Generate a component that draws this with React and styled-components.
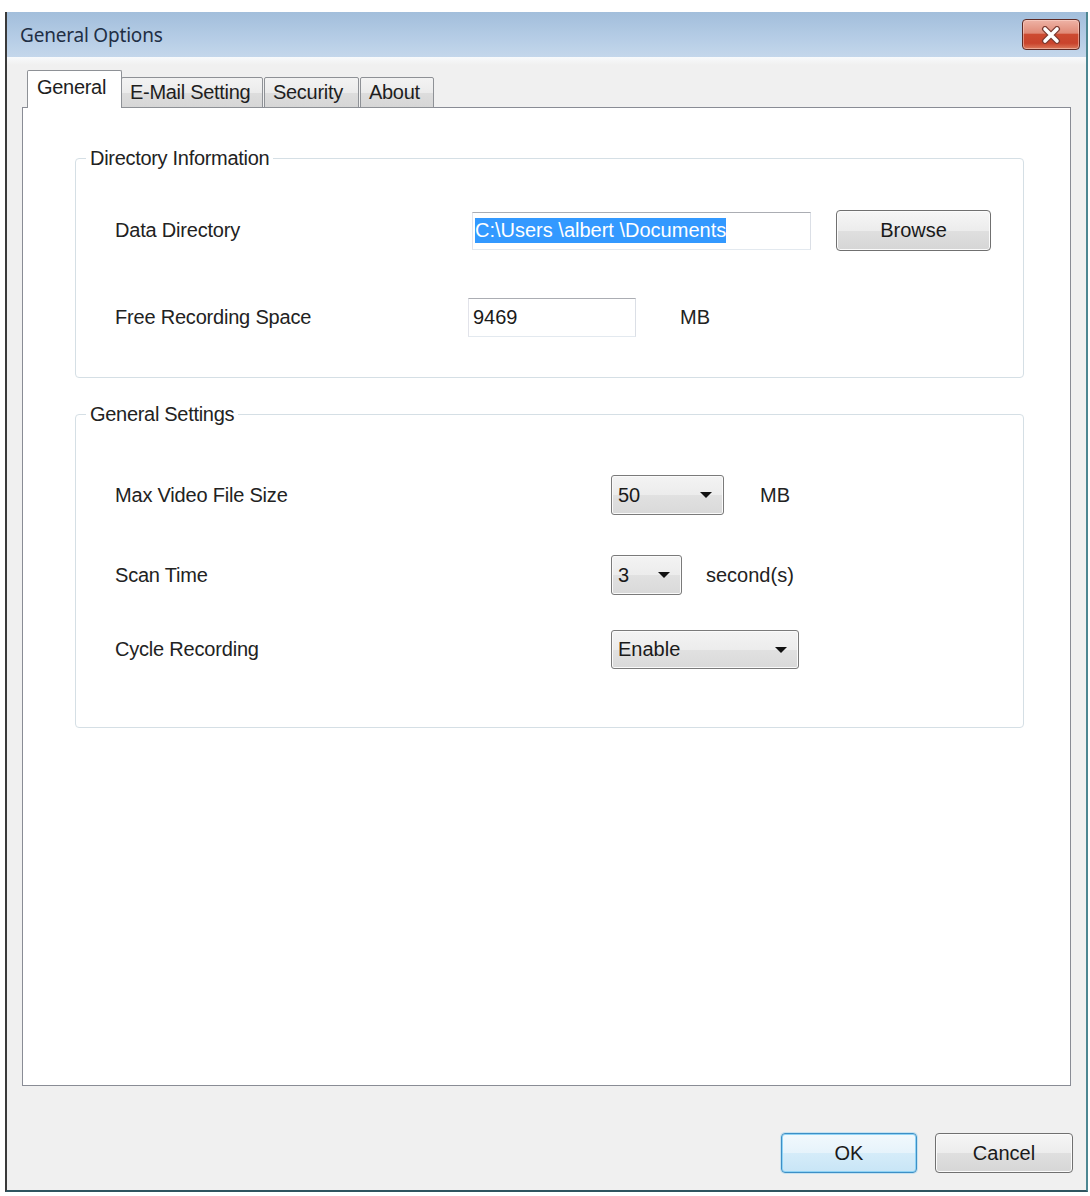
import React from 'react';
import styled, { createGlobalStyle } from 'styled-components';

const GlobalStyle = createGlobalStyle`
  body {
    margin: 0;
    background: #ffffff;
    font-family: "Liberation Sans", Arial, sans-serif;
  }
`;

const Window = styled.div`
  margin: 12px 0 0 5px;
  width: 1083px;
  height: 1180px;
  box-sizing: border-box;
  display: flex;
  flex-direction: column;
  border-left: 2px solid #3a3a3a;
  border-right: 2px solid #4d8792;
  border-bottom: 2px solid #2f5560;
  box-shadow: inset 2px 0 0 #e4eef6, inset -2px 0 0 #bfe3ec, inset 0 -2px 0 #b9e1ea;
  background: #f0f0f0;
`;

const TitleBar = styled.div`
  height: 45px;
  flex: none;
  display: flex;
  align-items: center;
  justify-content: space-between;
  padding: 0 6px 0 13px;
  background: linear-gradient(#a2bedb, #b6cde6 60%, #c4d7eb);
`;

const Title = styled.span`
  font-family: "Noto Sans", "Liberation Sans", sans-serif;
  font-size: 19px;
  color: #1f2f45;
  letter-spacing: -0.2px;
`;

const CloseButton = styled.div`
  width: 58px;
  height: 31px;
  box-sizing: border-box;
  border: 1px solid #5e2a24;
  border-radius: 4px;
  display: flex;
  align-items: center;
  justify-content: center;
  background: linear-gradient(#eeb3a6, #e08a77 45%, #cc4a31 50%, #c9432c 80%, #dc7a5c);
  box-shadow: inset 0 0 0 1px rgba(255, 220, 210, 0.5);
`;

const Body = styled.div`
  flex: 1;
  display: flex;
  flex-direction: column;
  padding: 13px 15px 0 15px;
  background: linear-gradient(#f8fafc, #f0f0f0 8px);
`;

const TabRow = styled.div`
  display: flex;
  align-items: flex-end;
  padding-left: 5px;
  margin-bottom: -1px;
  position: relative;
  z-index: 1;
`;

const Tab = styled.div`
  width: ${p => p.w}px;
  height: ${p => (p.selected ? 38 : 31)}px;
  box-sizing: border-box;
  margin-right: ${p => p.gap || 0}px;
  margin-left: ${p => (p.selected ? 0 : -1)}px;
  display: flex;
  align-items: center;
  padding: ${p => (p.selected ? '0 0 4px 9px' : '0 0 0 8px')};
  font-size: 20px;
  letter-spacing: -0.3px;
  color: #1e1e1e;
  border: 1px solid #8e9196;
  border-bottom: ${p => (p.selected ? 'none' : '1px solid #8e9196')};
  border-radius: 2px 2px 0 0;
  background: ${p =>
    p.selected ? '#ffffff' : 'linear-gradient(#f3f3f3, #ebebeb 50%, #dddddd 51%, #d6d6d6)'};
`;

const Panel = styled.div`
  height: 979px;
  box-sizing: border-box;
  border: 1px solid #898c95;
  background: #ffffff;
  display: flex;
  flex-direction: column;
  padding: 39px 46px 0 52px;
`;

const Group = styled.fieldset`
  margin: ${p => p.top}px 0 0 0;
  padding: 0;
  border: 1px solid #d5dfe5;
  border-radius: 4px;
  min-width: 0;
`;

const Legend = styled.legend`
  margin-left: 10px;
  padding: 0 4px;
  font-size: 20px;
  line-height: 22px;
  letter-spacing: -0.3px;
  color: #222;
`;

const GroupBody = styled.div`
  display: flex;
  flex-direction: column;
  gap: ${p => p.gap || 0}px;
  padding: ${p => p.pt}px 0 ${p => p.pb}px 39px;
`;

const Row = styled.div`
  display: flex;
  align-items: center;
  height: ${p => p.h || 41}px;
  margin-top: ${p => p.mt || 0}px;
`;

const Label = styled.div`
  width: ${p => p.w}px;
  flex: none;
  font-size: 20px;
  letter-spacing: -0.2px;
  color: #222;
`;

const Unit = styled.span`
  margin-left: ${p => p.gap}px;
  font-size: 20px;
  color: #222;
`;

const TextBox = styled.div`
  width: ${p => p.w}px;
  height: ${p => p.h}px;
  margin-left: ${p => p.ml || 0}px;
  box-sizing: border-box;
  border: 1px solid;
  border-color: #abadb3 #dbdfe6 #e3e9ef #e2e3ea;
  background: #fff;
  display: flex;
  align-items: center;
  padding-left: ${p => p.pl}px;
  font-size: 20px;
  color: #1a1a1a;
  white-space: nowrap;
  overflow: hidden;
`;

const Selected = styled.span`
  background: #3399ff;
  color: #ffffff;
  line-height: 25px;
`;

const Button = styled.div`
  width: ${p => p.w}px;
  height: ${p => p.h || 40}px;
  margin-left: ${p => p.ml || 0}px;
  box-sizing: border-box;
  border: 1px solid ${p => (p.primary ? '#3d8fc6' : '#707070')};
  border-radius: 4px;
  display: flex;
  align-items: center;
  justify-content: center;
  font-size: 20px;
  color: #1a1a1a;
  background: ${p =>
    p.primary
      ? 'linear-gradient(#f2f9fd, #e6f3fb 50%, #d5ecf9 51%, #c8e5f6)'
      : 'linear-gradient(#f6f6f6, #ececec 50%, #dfdfdf 51%, #d6d6d6)'};
  box-shadow: ${p =>
    p.primary
      ? 'inset 0 0 0 1px #8fd3f5, 0 0 0 1px rgba(120, 200, 240, 0.35)'
      : 'inset 0 0 0 1px #fbfbfb'};
`;

const Combo = styled.div`
  width: ${p => p.w}px;
  height: ${p => p.h || 40}px;
  box-sizing: border-box;
  border: 1px solid #7a7a7a;
  border-radius: 3px;
  display: flex;
  align-items: center;
  justify-content: space-between;
  padding: 0 11px 0 6px;
  font-size: 20px;
  color: #1a1a1a;
  background: linear-gradient(#f3f3f3, #ececec 50%, #e1e1e1 51%, #d9d9d9);
  box-shadow: inset 0 0 0 1px #fafafa;
`;

const Arrow = styled.span`
  width: 0;
  height: 0;
  border-left: 6px solid transparent;
  border-right: 6px solid transparent;
  border-top: 6px solid #111;
`;

const Footer = styled.div`
  display: flex;
  justify-content: flex-end;
  padding: 47px 0 0 0;
  margin-right: -2px;
`;

const CloseGlyph = () => (
  <svg width="22" height="18" viewBox="0 0 22 18">
    <path d="M5 3 L17 15 M17 3 L5 15" stroke="#7a3a30" strokeWidth="6" strokeLinecap="round" />
    <path d="M5 3 L17 15 M17 3 L5 15" stroke="#ffffff" strokeWidth="3.6" strokeLinecap="round" />
  </svg>
);

const tabs = [
  { name: 'General', w: 95, selected: true },
  { name: 'E-Mail Setting', w: 142, gap: 2 },
  { name: 'Security', w: 95, gap: 2 },
  { name: 'About', w: 74 },
];

export default function App() {
  return (
    <>
      <GlobalStyle />
      <Window>
        <TitleBar>
          <Title>General Options</Title>
          <CloseButton>
            <CloseGlyph />
          </CloseButton>
        </TitleBar>
        <Body>
          <TabRow>
            {tabs.map(t => (
              <Tab key={t.name} w={t.w} gap={t.gap} selected={t.selected}>
                {t.name}
              </Tab>
            ))}
          </TabRow>
          <Panel>
            <Group top={0}>
              <Legend>Directory Information</Legend>
              <GroupBody gap={46} pt={41} pb={39}>
                <Row>
                  <Label w={353}>Data Directory</Label>
                  <TextBox w={339} h={38} ml={4} pl={2}>
                    <Selected>C:\Users \albert \Documents</Selected>
                  </TextBox>
                  <Button w={155} h={41} ml={25}>Browse</Button>
                </Row>
                <Row>
                  <Label w={353}>Free Recording Space</Label>
                  <TextBox w={168} h={39} pl={4}>9469</TextBox>
                  <Unit gap={44}>MB</Unit>
                </Row>
              </GroupBody>
            </Group>
            <Group top={25}>
              <Legend>General Settings</Legend>
              <GroupBody pt={50} pb={58}>
                <Row h={40}>
                  <Label w={496}>Max Video File Size</Label>
                  <Combo w={113}>50<Arrow /></Combo>
                  <Unit gap={36}>MB</Unit>
                </Row>
                <Row h={40} mt={40}>
                  <Label w={496}>Scan Time</Label>
                  <Combo w={71}>3<Arrow /></Combo>
                  <Unit gap={24}>second(s)</Unit>
                </Row>
                <Row h={39} mt={35}>
                  <Label w={496}>Cycle Recording</Label>
                  <Combo w={188} h={39}>Enable<Arrow /></Combo>
                </Row>
              </GroupBody>
            </Group>
          </Panel>
          <Footer>
            <Button w={136} primary>OK</Button>
            <Button w={138} ml={18}>Cancel</Button>
          </Footer>
        </Body>
      </Window>
    </>
  );
}
